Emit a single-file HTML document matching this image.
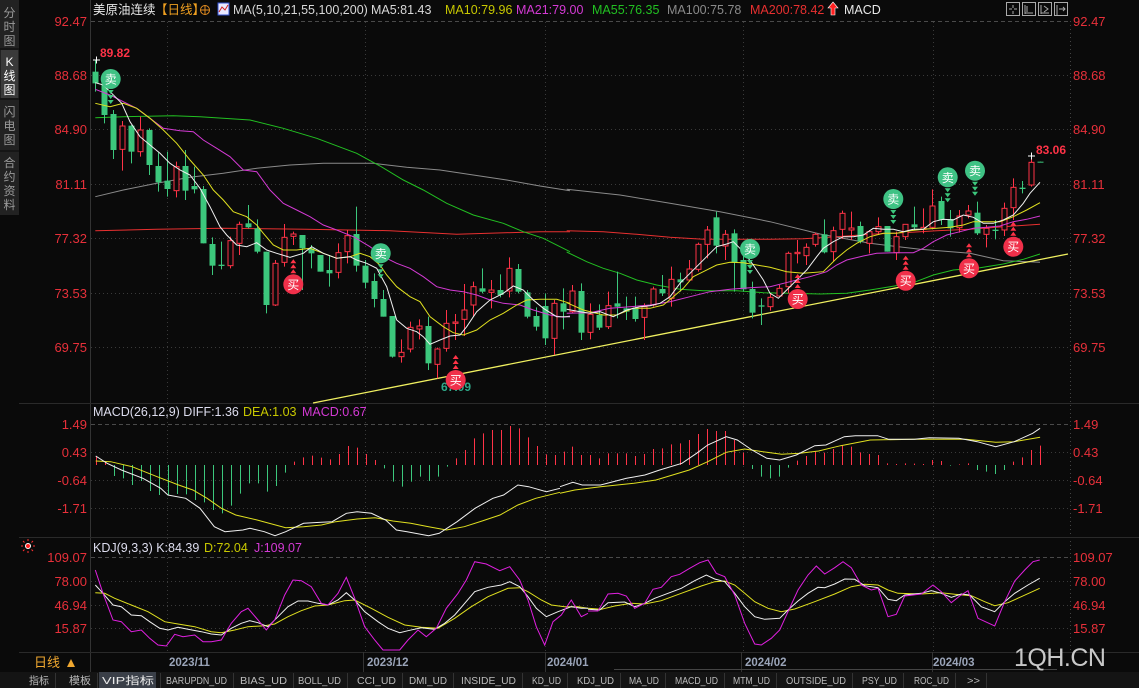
<!DOCTYPE html>
<html><head><meta charset="utf-8"><style>
html,body{margin:0;padding:0;background:#0a0a0a;width:1139px;height:688px;overflow:hidden}
svg{display:block}
text{font-family:"Liberation Sans","Noto Sans CJK SC",sans-serif}
</style></head><body>
<svg id="s" width="1139" height="688" viewBox="0 0 1139 688" xmlns="http://www.w3.org/2000/svg">
<rect width="1139" height="688" fill="#0a0a0a"/>
<!-- sidebar -->
<rect x="0" y="0" width="19" height="215" fill="#222"/>
<rect x="1" y="50" width="17" height="48" fill="#3a3a3a"/>
<line x1="0" y1="49" x2="19" y2="49" stroke="#0a0a0a"/><line x1="0" y1="99" x2="19" y2="99" stroke="#0a0a0a"/><line x1="0" y1="151" x2="19" y2="151" stroke="#0a0a0a"/>
<g font-size="12" fill="#9a9a9a" text-anchor="middle">
<text x="9.5" y="17">分</text><text x="9.5" y="31">时</text><text x="9.5" y="45">图</text>
<text x="9.5" y="66" fill="#fff">K</text><text x="9.5" y="80" fill="#fff">线</text><text x="9.5" y="94" fill="#fff">图</text>
<text x="9.5" y="116">闪</text><text x="9.5" y="130">电</text><text x="9.5" y="144">图</text>
<text x="9.5" y="167">合</text><text x="9.5" y="181">约</text><text x="9.5" y="195">资</text><text x="9.5" y="209">料</text>
</g>
<!-- frame -->
<line x1="90.5" y1="0" x2="90.5" y2="672" stroke="#333"/>
<line x1="1070.5" y1="21" x2="1070.5" y2="652" stroke="#444" stroke-dasharray="1,3"/>
<line x1="19" y1="403.5" x2="1139" y2="403.5" stroke="#2a2a2a"/>
<line x1="19" y1="537.5" x2="1139" y2="537.5" stroke="#2a2a2a"/>
<line x1="19" y1="652.5" x2="1139" y2="652.5" stroke="#2a2a2a"/>
<g id="grid" stroke="#3a3a3a" stroke-dasharray="1,3"></g>
<line x1="91" y1="21.5" x2="1070" y2="21.5" stroke="#4a4a4a" stroke-dasharray="4,3"/>
<line x1="91" y1="424.5" x2="1070" y2="424.5" stroke="#4a4a4a" stroke-dasharray="4,3"/>
<line x1="91" y1="557.5" x2="1070" y2="557.5" stroke="#4a4a4a" stroke-dasharray="4,3"/>
<!-- header -->
<g font-size="12.5">
<text x="93" y="14" fill="#e8e8e8">美原油连续</text><text x="155" y="14" fill="#f0a020">【日线】</text>
<circle cx="205" cy="10" r="4.5" fill="none" stroke="#e08a20"/><line x1="200" y1="10" x2="210" y2="10" stroke="#e08a20"/><line x1="205" y1="5" x2="205" y2="15" stroke="#e08a20"/>
<rect x="218" y="3" width="11" height="12" fill="#e8e8ff" stroke="#3050d0"/><polyline points="219,12 222,7 225,10 228,5" fill="none" stroke="#d02020"/>
<text x="233" y="14" fill="#d8d8d8">MA(5,10,21,55,100,200)</text>
<text x="371" y="14" fill="#d8d8d8">MA5:81.43</text>
<text x="445" y="14" fill="#c8c800">MA10:79.96</text>
<text x="516" y="14" fill="#d43ad4">MA21:79.00</text>
<text x="592" y="14" fill="#22c022">MA55:76.35</text>
<text x="667" y="14" fill="#8a8a8a">MA100:75.78</text>
<text x="750" y="14" fill="#e83030">MA200:78.42</text>
<path d="M833 2 L838 8 L835 8 L835 15 L831 15 L831 8 L828 8 Z" fill="#ff2020" stroke="#fff" stroke-width=".6"/>
<text x="844" y="14" fill="#e8e8e8">MACD</text>
</g>
<g fill="none" stroke="#aaa">
<rect x="1006.5" y="2.5" width="13" height="13"/><rect x="1022.5" y="2.5" width="13" height="13"/><rect x="1038.5" y="2.5" width="13" height="13"/><rect x="1054.5" y="2.5" width="13" height="13"/>
<path d="M1013 5v3M1013 11v3M1009 9h3M1014 9h3M1025 5v9M1025 13h8M1027 6v6M1041 5v9M1041 13h8M1044 6l4 3-4 3M1057 5v10M1059 9h6M1063 7l2 2-2 2"/>
</g>
<!-- axis labels -->
<g font-size="13" fill="#e8303a">
<g text-anchor="end">
<text x="87" y="26">92.47</text><text x="87" y="80">88.68</text><text x="87" y="134">84.90</text><text x="87" y="189">81.11</text><text x="87" y="243">77.32</text><text x="87" y="298">73.53</text><text x="87" y="352">69.75</text>
<text x="87" y="429">1.49</text><text x="87" y="457">0.43</text><text x="87" y="485">-0.64</text><text x="87" y="513">-1.71</text>
<text x="87" y="562">109.07</text><text x="87" y="586">78.00</text><text x="87" y="610">46.94</text><text x="87" y="633">15.87</text>
</g>
<text x="1073" y="26">92.47</text><text x="1073" y="80">88.68</text><text x="1073" y="134">84.90</text><text x="1073" y="189">81.11</text><text x="1073" y="243">77.32</text><text x="1073" y="298">73.53</text><text x="1073" y="352">69.75</text>
<text x="1073" y="429">1.49</text><text x="1073" y="457">0.43</text><text x="1073" y="485">-0.64</text><text x="1073" y="513">-1.71</text>
<text x="1073" y="562">109.07</text><text x="1073" y="586">78.00</text><text x="1073" y="610">46.94</text><text x="1073" y="633">15.87</text>
</g>
<g id="main"></g>
<g id="macd"></g>
<g id="kdj"></g>
<!-- sub titles -->
<g font-size="12.5">
<text x="93" y="416" fill="#dde">MACD(26,12,9) DIFF:1.36</text>
<text x="243" y="416" fill="#c8c800">DEA:1.03</text>
<text x="302" y="416" fill="#d43ad4">MACD:0.67</text>
<text x="93" y="552" fill="#dde">KDJ(9,3,3) K:84.39</text>
<text x="204" y="552" fill="#c8c800">D:72.04</text>
<text x="254" y="552" fill="#d43ad4">J:109.07</text>
</g>
<g stroke="#ff3030" stroke-width="1"><circle cx="28" cy="546" r="2.5" fill="#ff2020" stroke="#fff"/><path d="M28 539v2M28 551v2M21 546h2M33 546h2M23 541l1.5 1.5M33 541l-1.5 1.5M23 551l1.5-1.5M33 551l-1.5-1.5"/></g>
<!-- date row -->
<g stroke="#333"><line x1="363.5" y1="652" x2="363.5" y2="672"/><line x1="545.5" y1="652" x2="545.5" y2="672"/><line x1="741.5" y1="652" x2="741.5" y2="672"/><line x1="932.5" y1="652" x2="932.5" y2="672"/></g>
<line x1="614" y1="669.5" x2="1057" y2="669.5" stroke="#444"/>
<text x="34" y="667" font-size="13" fill="#f0a830">日线</text><path d="M67 667 L71 659 L75 667Z" fill="#f0a830"/>
<g font-size="11.5" font-weight="bold" fill="#9aa4b8">
<text x="169" y="666">2023/11</text><text x="367" y="666">2023/12</text><text x="547" y="666">2024/01</text><text x="745" y="666">2024/02</text><text x="933" y="666">2024/03</text>
</g>
<text x="1014" y="666" font-size="25" fill="#c8c8c8" font-family="Liberation Sans, sans-serif" letter-spacing="-0.5">1QH.CN</text>
<!-- tabs -->
<rect x="0" y="672" width="1139" height="16" fill="#141414"/>
<rect x="99" y="672" width="57" height="16" fill="#3a3f48"/>
<g id="tabs" font-size="10.5" fill="#bbb"></g>
</svg>
<script>
const NS="http://www.w3.org/2000/svg";
function el(p,t,a,txt){const e=document.createElementNS(NS,t);for(const k in a)e.setAttribute(k,a[k]);if(txt!=null)e.textContent=txt;p.appendChild(e);return e;}
const G=id=>document.getElementById(id);
// grid
const grid=G('grid');
[75.5,129.5,184.5,238.5,293.5,347.5,452.5,480.5,508.5,581.5,605.5,628.5].forEach(y=>el(grid,'line',{x1:91,y1:y,x2:1070,y2:y}));
[167.5,365.5,545.5,743.5,933.5].forEach(x=>el(grid,'line',{x1:x,y1:22,x2:x,y2:652}));
const Z4=(x,y)=>[x/3+90,y/3+60],Z5=(x,y)=>[x/3+570,y/3+140],Z6=(x,y)=>[x/2.8,y/3+395],Z7=(x,y)=>[x/2.708+560,y/3+395],Z10=(x,y)=>[x/3+88,y/3+540],Z11=(x,y)=>[x/3+588,y/3+540];
function pl(g,f,pts,col,w){el(g,'polyline',{points:pts.map(p=>f(p[0],p[1]).map(v=>v.toFixed(1)).join(',')).join(' '),fill:'none',stroke:col,'stroke-width':w||1});}
const M=G('main');
// MAs
pl(M,Z4,[[16,512],[200,508],[400,505],[650,508],[900,512],[1100,523],[1350,515],[1440,515]],'#e83030');
pl(M,Z5,[[-10,272],[100,275],[200,283],[300,292],[400,298],[600,298],[700,296],[800,290],[900,283],[1000,278],[1100,272],[1200,268],[1300,260],[1410,253]],'#e83030');
pl(M,Z4,[[16,410],[100,390],[200,370],[300,352],[400,340],[500,325],[600,315],[700,310],[850,310],[950,322],[1050,330],[1150,345],[1250,360],[1350,378],[1440,392]],'#8a8a8a');
pl(M,Z5,[[-10,148],[150,165],[300,190],[450,215],[600,245],[750,282],[900,310],[1050,328],[1200,340],[1300,362],[1410,367]],'#8a8a8a');
pl(M,Z4,[[16,173],[100,170],[250,167],[330,170],[480,180],[580,205],[680,235],[800,280],[870,318],[940,360],[1000,390],[1070,430],[1150,465],[1240,490],[1300,515],[1360,535],[1440,575]],'#22c022');
pl(M,Z5,[[-10,336],[50,365],[100,385],[150,400],[200,420],[260,435],[330,448],[400,452],[500,452],[580,458],[660,460],[750,462],[830,460],[900,450],[960,440],[1030,428],[1090,405],[1150,390],[1230,383],[1300,372],[1360,358],[1410,342]],'#22c022');
// trendline
el(M,'line',{x1:313,y1:403,x2:1068,y2:254,stroke:'#f0f060','stroke-width':1.3});
// candles
const C4=[[16,35,70,0,95,'g'],[43,70,165,60,190,'g'],[70,162,270,150,297,'g'],[97,198,268,183,332,'r'],[124,197,275,195,310,'g'],[151,210,275,170,290,'r'],[178,210,315,205,345,'g'],[205,318,367,278,395,'g'],[232,362,387,275,410,'g'],[258,320,392,305,412,'r'],[285,318,392,270,420,'g'],[312,378,388,320,400,'g'],[340,387,550,378,550,'g'],[367,552,617,532,645,'g'],[394,614,618,545,628,'g'],[421,542,617,530,625,'r'],[448,493,550,485,585,'r'],[475,490,502,435,505,'g'],[502,505,575,478,580,'g'],[529,575,735,575,760,'g'],[556,610,735,600,738,'r'],[583,532,607,492,620,'r'],[610,522,529,515,555,'r'],[637,525,565,525,690,'g'],[664,565,580,555,625,'g'],[691,585,635,585,635,'g'],[718,630,640,585,680,'g'],[745,578,637,550,655,'r'],[772,527,575,510,610,'r'],[799,522,617,440,635,'g'],[826,617,668,600,685,'g'],[853,663,717,640,742,'g'],[880,717,770,690,770,'g'],[907,768,890,768,893,'g'],[934,877,890,838,908,'r'],[961,802,867,785,877,'r'],[988,798,807,778,838,'r'],[1015,798,910,770,930,'g'],[1042,867,913,863,955,'r'],[1069,790,865,750,875,'r'],[1096,786,790,762,840,'r'],[1123,750,778,672,828,'r'],[1150,680,735,665,770,'r'],[1177,685,695,625,700,'g'],[1204,690,697,660,745,'r'],[1231,690,705,643,712,'g'],[1258,625,693,592,712,'r'],[1285,627,695,612,700,'g'],[1312,697,770,690,775,'g'],[1339,768,800,742,812,'g'],[1366,738,835,700,855,'g'],[1393,730,835,720,885,'r'],[1420,730,755,685,808,'g']];
const C5=[[6,453,515,435,520,'r'],[33,453,578,430,600,'g'],[60,523,577,490,598,'r'],[87,525,563,493,570,'g'],[114,497,560,455,567,'r'],[141,490,500,395,535,'g'],[168,505,515,470,540,'g'],[195,503,537,470,545,'g'],[222,500,532,490,600,'r'],[249,447,495,440,500,'r'],[276,447,460,405,468,'g'],[303,418,475,380,500,'r'],[330,418,427,398,455,'g'],[357,387,420,360,425,'r'],[384,313,388,308,395,'r'],[411,270,313,258,355,'r'],[438,232,317,215,340,'g'],[465,283,318,270,360,'r'],[492,280,368,268,455,'g'],[519,360,448,340,455,'g'],[546,447,518,425,535,'g'],[573,496,500,475,555,'g'],[600,472,500,460,512,'r'],[627,445,468,435,470,'r'],[654,340,440,335,460,'r'],[681,337,341,300,370,'r'],[708,322,347,310,375,'r'],[735,283,313,278,320,'r'],[762,283,337,238,340,'g'],[789,272,335,260,365,'r'],[816,220,268,212,297,'r'],[843,264,270,215,300,'r'],[870,258,305,245,310,'g'],[897,275,310,270,340,'r'],[924,260,275,232,285,'r'],[951,258,335,258,335,'g'],[978,290,338,275,360,'r'],[1005,253,290,252,300,'r'],[1032,253,262,200,270,'g'],[1059,262,268,205,280,'r'],[1086,198,262,148,268,'r'],[1113,183,240,170,255,'g'],[1140,237,265,210,290,'g'],[1167,228,263,210,278,'r'],[1194,213,225,195,235,'r'],[1221,218,280,185,285,'g'],[1248,265,283,255,322,'r'],[1275,269,273,240,298,'g'],[1302,205,270,188,288,'r'],[1329,142,203,115,240,'r'],[1356,143,147,123,160,'g'],[1383,67,135,47,140,'r'],[1410,65,67,65,67,'g']];
function cand(f,c){const [x,bt]=f(c[0],c[1]);const bb=f(c[0],c[2])[1],wt=f(c[0],c[3])[1],wb=f(c[0],c[4])[1];const col=c[5]=='g'?'#3cc77c':'#ff3347';
const xx=Math.round(x)+.5;
if(c[5]=='g'){el(M,'line',{x1:xx,y1:wt,x2:xx,y2:wb,stroke:col});el(M,'rect',{x:xx-3,y:bt,width:6,height:Math.max(1,bb-bt),fill:col});}
else{el(M,'line',{x1:xx,y1:wt,x2:xx,y2:bt,stroke:col});el(M,'line',{x1:xx,y1:bb,x2:xx,y2:wb,stroke:col});el(M,'rect',{x:xx-2.5,y:bt,width:5,height:Math.max(1,bb-bt),fill:'#0a0a0a',stroke:col});}}
C4.forEach(c=>cand(Z4,c));C5.forEach(c=>cand(Z5,c));
// short MAs
pl(M,Z4,[[16,88],[60,105],[100,125],[140,145],[180,175],[220,205],[270,212],[310,215],[340,240],[380,265],[420,290],[460,330],[500,335],[540,390],[580,430],[620,450],[660,470],[700,495],[740,510],[790,530],[840,560],[880,590],[920,610],[960,625],[1000,650],[1040,680],[1080,690],[1120,695],[1160,705],[1200,720],[1240,730],[1290,735],[1330,750],[1380,765],[1420,772],[1440,768]],'#d43ad4');
pl(M,Z5,[[-10,520],[60,518],[120,505],[180,500],[240,495],[300,485],[360,470],[420,455],[480,448],[540,443],[600,440],[660,425],[720,410],[770,395],[800,375],[830,360],[880,348],[920,340],[980,338],[1030,338],[1060,325],[1090,305],[1130,285],[1170,275],[1210,265],[1250,262],[1290,258],[1330,245],[1370,238],[1410,228]],'#d43ad4');
pl(M,Z4,[[16,130],[60,140],[100,130],[140,145],[180,175],[220,210],[260,250],[300,300],[340,345],[370,390],[400,420],[430,455],[470,470],[500,495],[520,520],[550,555],[580,570],[620,570],[660,565],[700,580],[740,595],[780,590],[810,580],[840,590],[870,615],[890,645],[920,680],[960,710],[990,725],[1020,770],[1060,800],[1090,818],[1120,825],[1160,810],[1200,780],[1240,760],[1280,735],[1310,720],[1350,718],[1400,718],[1440,730]],'#e0e020');
pl(M,Z5,[[-10,488],[40,510],[100,525],[140,525],[190,505],[240,505],[280,495],[310,470],[340,445],[370,410],[400,395],[440,375],[480,367],[520,368],[560,375],[600,382],[650,395],[700,400],[760,395],[800,355],[830,330],[860,310],[900,290],[940,280],[980,280],[1020,272],[1060,268],[1100,265],[1140,262],[1180,255],[1210,245],[1250,245],[1290,245],[1330,230],[1370,210],[1410,188]],'#e0e020');
pl(M,Z4,[[16,68],[40,75],[65,100],[95,130],[120,185],[150,230],[180,255],[210,280],[240,310],[270,330],[300,345],[330,385],[360,440],[390,500],[410,525],[440,555],[470,560],[500,548],[530,570],[560,580],[600,592],[640,580],[665,560],[700,580],[740,595],[780,590],[800,600],[830,610],[860,625],[890,680],[920,780],[950,805],[980,815],[1000,830],[1020,853],[1050,840],[1080,828],[1110,825],[1130,800],[1160,755],[1200,720],[1240,700],[1270,678],[1300,690],[1330,720],[1360,745],[1400,770],[1440,770]],'#f0f0f0');
pl(M,Z5,[[-10,508],[30,515],[60,520],[90,515],[130,530],[170,510],[210,500],[240,497],[270,490],[300,470],[330,430],[360,400],[390,370],[420,340],[440,320],[470,312],[490,305],[520,335],[550,375],[580,420],[600,460],[625,475],[650,450],[680,420],[710,390],[740,350],[760,325],[790,305],[820,290],[850,290],[880,285],[910,265],[940,268],[970,268],[1000,275],[1030,268],[1060,268],[1090,245],[1120,238],[1150,240],[1180,225],[1210,232],[1240,250],[1270,250],[1300,240],[1330,225],[1360,190],[1380,160],[1410,127]],'#f0f0f0');
// crosses & labels
function cross(x,y){el(M,'path',{d:`M${x-3} ${y}h7M${x+.5} ${y-3.5}v7`,stroke:'#fff'});}
cross(96,60);cross(1031,156);
el(M,'text',{x:100,y:57,'font-size':12,'font-weight':'bold',fill:'#ff3347'},'89.82');
el(M,'text',{x:1036,y:154,'font-size':12,'font-weight':'bold',fill:'#ff3347'},'83.06');
el(M,'text',{x:441,y:391,'font-size':12,'font-weight':'bold',fill:'#2fa888'},'67.09');
function tri(x,y,up,col){el(M,'path',{d:up?`M${x-3} ${y+2}L${x} ${y-2}L${x+3} ${y+2}Z`:`M${x-3} ${y-2}L${x} ${y+2}L${x+3} ${y-2}Z`,fill:col});}
function sell(x,y){[13,18,23].forEach(d=>tri(x,y+d,false,'#3cc77c'));el(M,'circle',{cx:x,cy:y,r:10,fill:'#3fc284'});el(M,'text',{x:x,y:y+4.5,'font-size':12,fill:'#fff','text-anchor':'middle'},'卖');}
function buy(x,y){[13,18,23].forEach(d=>tri(x,y-d,true,'#ff3347'));el(M,'circle',{cx:x,cy:y,r:10,fill:'#f0304a'});el(M,'text',{x:x,y:y+4.5,'font-size':12,fill:'#fff','text-anchor':'middle'},'买');}
sell(110.7,79);sell(380.7,253.3);sell(750,249);sell(893.3,199);sell(947.7,177.3);sell(975,170.7);
buy(293.3,284.3);buy(455.7,380);buy(797.7,299);buy(905.7,280.7);buy(969,268.3);buy(1013.3,246.7);
// MACD
const MC=G('macd');
const H=[183,200,243,250,270,258,288,300,300,297,298,315,322,345,355,332,296,265,265,290,273,233,200,187,182,188,193,177,153,158,177,195,220,260,275,260,245,258,245,215,190,165,130,115,105,105,93,100,127,153,178,180,
170,155,180,180,190,175,175,175,183,177,162,160,148,145,135,117,102,108,108,135,173,222,245,250,245,218,197,183,170,173,162,150,155,172,177,180,205,207,205,206,207,195,198,212,208,205,225,230,237,225,200,187,165,152];
const sp=(1040-96)/(H.length-1);
H.forEach((h,i)=>{const x=Math.round(96+i*sp)+.5;const y=h/3+395,b=465;if(Math.abs(y-b)<.5)return;el(MC,'line',{x1:x,y1:b,x2:x,y2:y,stroke:h<210?'#ff3347':'#3cc77c'});});
pl(MC,Z6,[[268,198],[310,200],[370,215],[440,245],[500,270],[540,285],[580,310],[620,340],[660,360],[720,375],[800,398],[850,395],[900,390],[940,380],[1000,372],[1050,368],[1100,378],[1150,385],[1200,395],[1250,405],[1300,395],[1350,378],[1400,360],[1450,330],[1500,310],[1568,292]],'#e0e020');
pl(MC,Z7,[[0,295],[40,285],[110,275],[200,265],[260,255],[350,225],[400,200],[450,172],[500,162],[560,172],[600,178],[650,175],[700,168],[760,152],[840,135],[960,133],[1100,133],[1180,142],[1230,140],[1300,127]],'#e0e020');
pl(MC,Z6,[[268,183],[300,205],[340,225],[400,250],[450,280],[470,300],[520,310],[560,340],[600,395],[630,410],[680,405],[700,400],[740,410],[770,422],[800,410],[850,385],[900,382],[930,380],[970,355],[1000,350],[1040,355],[1080,375],[1110,405],[1140,410],[1200,422],[1230,415],[1280,380],[1330,340],[1380,310],[1410,300],[1450,270],[1480,275],[1530,290],[1568,280]],'#f0f0f0');
pl(MC,Z7,[[0,275],[35,262],[60,270],[110,270],[180,250],[230,240],[270,225],[330,205],[370,175],[400,150],[450,125],[480,135],[520,165],[560,190],[595,195],[640,180],[690,152],[720,150],[770,125],[800,122],[860,122],[890,133],[960,133],[1000,128],[1080,130],[1130,140],[1180,155],[1230,140],[1280,115],[1300,100]],'#f0f0f0');
// KDJ
const K=G('kdj');
pl(K,Z10,[[22,158],[50,160],[80,175],[130,195],[180,215],[230,245],[270,252],[320,260],[370,275],[400,278],[440,270],[480,260],[530,257],[560,252],[600,230],[640,212],[680,198],[720,195],[770,182],[800,180],[850,205],[900,232],[950,255],[1000,262],[1050,265],[1100,235],[1150,200],[1200,170],[1260,145],[1295,143],[1320,155],[1360,180],[1390,195],[1430,200],[1470,200],[1500,205]],'#e0e020');
pl(K,Z11,[[0,205],[40,208],[80,198],[130,190],[170,192],[220,182],[280,160],[340,138],[380,125],[410,123],[440,135],[470,160],[500,185],[540,205],[580,215],[620,207],[680,185],[740,162],[790,140],[830,133],[870,135],[900,150],[930,160],[1000,162],[1060,158],[1100,163],[1150,167],[1190,185],[1220,197],[1260,188],[1300,170],[1355,145]],'#e0e020');
pl(K,Z10,[[22,135],[45,160],[75,195],[100,200],[130,225],[160,227],[185,245],[215,265],[240,270],[270,262],[300,268],[340,275],[370,282],[400,285],[430,265],[460,250],[485,242],[510,248],[540,260],[570,230],[600,200],[630,183],[660,183],[690,190],[720,195],[750,180],[775,158],[800,180],[830,215],[870,245],[900,265],[935,278],[960,272],[1000,263],[1040,268],[1070,250],[1100,225],[1130,190],[1160,155],[1200,142],[1240,135],[1265,125],[1295,140],[1320,170],[1345,205],[1375,230],[1410,215],[1450,200],[1480,205],[1500,205]],'#f0f0f0');
pl(K,Z11,[[0,208],[35,210],[60,188],[110,186],[140,200],[170,190],[200,175],[240,160],[280,145],[320,122],[355,105],[380,117],[410,125],[440,160],[470,200],[500,230],[530,238],[575,235],[600,210],[630,183],[660,160],[690,142],[710,143],[740,132],[770,117],[800,118],[830,137],[870,143],[900,178],[925,182],[950,165],[1000,160],[1030,152],[1060,160],[1090,172],[1120,162],[1145,165],[1180,200],[1220,215],[1250,185],[1280,160],[1320,135],[1355,115]],'#f0f0f0');
pl(K,Z10,[[22,90],[45,160],[75,240],[100,245],[130,275],[160,270],[185,295],[210,315],[235,318],[260,283],[285,290],[320,285],[345,305],[370,305],[400,300],[430,250],[460,215],[480,205],[510,240],[535,270],[560,240],[590,165],[615,120],[640,122],[670,140],[700,190],[720,195],[750,160],[775,112],[800,175],[830,260],[860,300],[885,330],[935,330],[960,300],[990,270],[1015,290],[1045,265],[1075,205],[1110,160],[1135,120],[1160,65],[1195,72],[1235,92],[1265,80],[1295,120],[1320,180],[1345,260],[1370,315],[1395,245],[1420,225],[1450,180],[1480,230],[1500,220]],'#e020e0');
pl(K,Z11,[[0,213],[30,213],[60,162],[90,160],[115,168],[140,205],[170,190],[195,148],[220,142],[250,110],[275,103],[305,85],[335,68],[360,60],[385,100],[410,110],[440,165],[470,250],[500,312],[520,315],[550,295],[575,270],[600,215],[630,150],[660,105],[685,78],[710,102],[740,83],[765,65],[790,83],[820,135],[850,150],[870,145],[900,230],[925,223],[950,168],[1000,162],[1035,135],[1060,155],[1090,188],[1115,168],[1140,152],[1170,235],[1220,258],[1250,185],[1280,123],[1310,90],[1335,65],[1355,60]],'#e020e0');
// tabs
const T=G('tabs');
[['指标',29,49],['模板',69,91],['VIP指标',102,154],['BARUPDN_UD',166,227],['BIAS_UD',240,287],['BOLL_UD',298,341],['CCI_UD',357,396],['DMI_UD',409,447],['INSIDE_UD',461,516],['KD_UD',532,561],['KDJ_UD',577,614],['MA_UD',629,659],['MACD_UD',675,718],['MTM_UD',733,770],['OUTSIDE_UD',786,846],['PSY_UD',862,897],['ROC_UD',914,949],['>>',967,980]].forEach(t=>{const e=el(T,'text',{x:(t[1]+t[2])/2,y:684,'text-anchor':'middle',textLength:t[2]-t[1],lengthAdjust:'spacingAndGlyphs'},t[0]);if(t[0]=='VIP指标')e.setAttribute('fill','#e8e8e8');el(T,'line',{x1:t[2]+6.5,y1:673,x2:t[2]+6.5,y2:688,stroke:'#333'});});
</script>
</body></html>
